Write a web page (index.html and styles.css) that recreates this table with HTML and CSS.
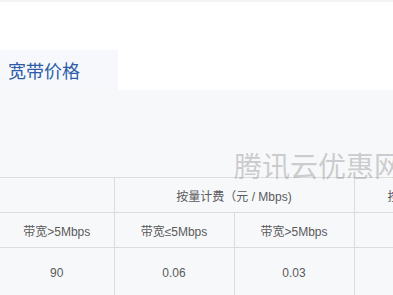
FILE: index.html
```html
<!DOCTYPE html>
<html lang="zh-CN">
<head>
<meta charset="utf-8">
<link rel="stylesheet" href="styles.css">
</head>
<body>
<div class="topline"></div>
<div class="header-space"></div>
<div class="tabs">
  <div class="tab">宽带价格</div>
</div>
<div class="content">
  <div class="watermark">腾讯云优惠网</div>
  <table class="price">
    <colgroup>
      <col class="c0">
      <col class="c1">
      <col class="c1">
      <col class="c1">
    </colgroup>
    <tr class="r1">
      <td class="first"></td>
      <td colspan="2">按量计费（元 / Mbps)</td>
      <td class="cut">按</td>
    </tr>
    <tr class="r2">
      <td class="first">带宽&gt;5Mbps</td>
      <td>带宽≤5Mbps</td>
      <td>带宽&gt;5Mbps</td>
      <td></td>
    </tr>
    <tr class="r3">
      <td class="first">90</td>
      <td>0.06</td>
      <td>0.03</td>
      <td></td>
    </tr>
  </table>
</div>
</body>
</html>
```
FILE: styles.css
```css
html, body {
  margin: 0;
  padding: 0;
  background: #ffffff;
  overflow: hidden;
}
body {
  width: 393px;
  height: 295px;
  font-family: "Liberation Sans", "Noto Sans CJK SC", sans-serif;
}
.topline {
  height: 2px;
  background: #f3f3f3;
}
.header-space {
  height: 48px;
  background: #ffffff;
}
.tabs {
  display: flex;
  height: 40px;
  background: #ffffff;
}
.tab {
  width: 110px;
  padding-left: 8px;
  background: #f6f8fb;
  color: #2e5da8;
  font-family: "Noto Sans CJK SC", sans-serif;
  font-size: 18px;
  line-height: 40px;
}
.content {
  position: relative;
  background: #f7f8fa;
  padding-top: 87px;
  height: 200px;
  width: 600px;
}
.watermark {
  position: absolute;
  left: 234px;
  top: 59px;
  font-family: "Noto Sans CJK SC", sans-serif;
  font-size: 28px;
  line-height: 32px;
  color: rgba(140, 140, 140, 0.42);
  white-space: nowrap;
}
.price {
  border-collapse: collapse;
  table-layout: fixed;
  width: 474px;
  color: #5a5a5a;
  font-size: 12px;
}
.price .c0 {
  width: 114px;
}
.price .c1 {
  width: 120px;
}
.price td {
  border: 1px solid #dcdcdc;
  text-align: center;
  padding: 0;
  white-space: nowrap;
  overflow: hidden;
}
.price td.first {
  border-left: none;
}
.price .r1 td,
.price .r2 td {
  height: 34px;
}
.price .r3 td {
  height: 50px;
}
.price td.cut {
  text-align: left;
  padding-left: 33px;
}
```
